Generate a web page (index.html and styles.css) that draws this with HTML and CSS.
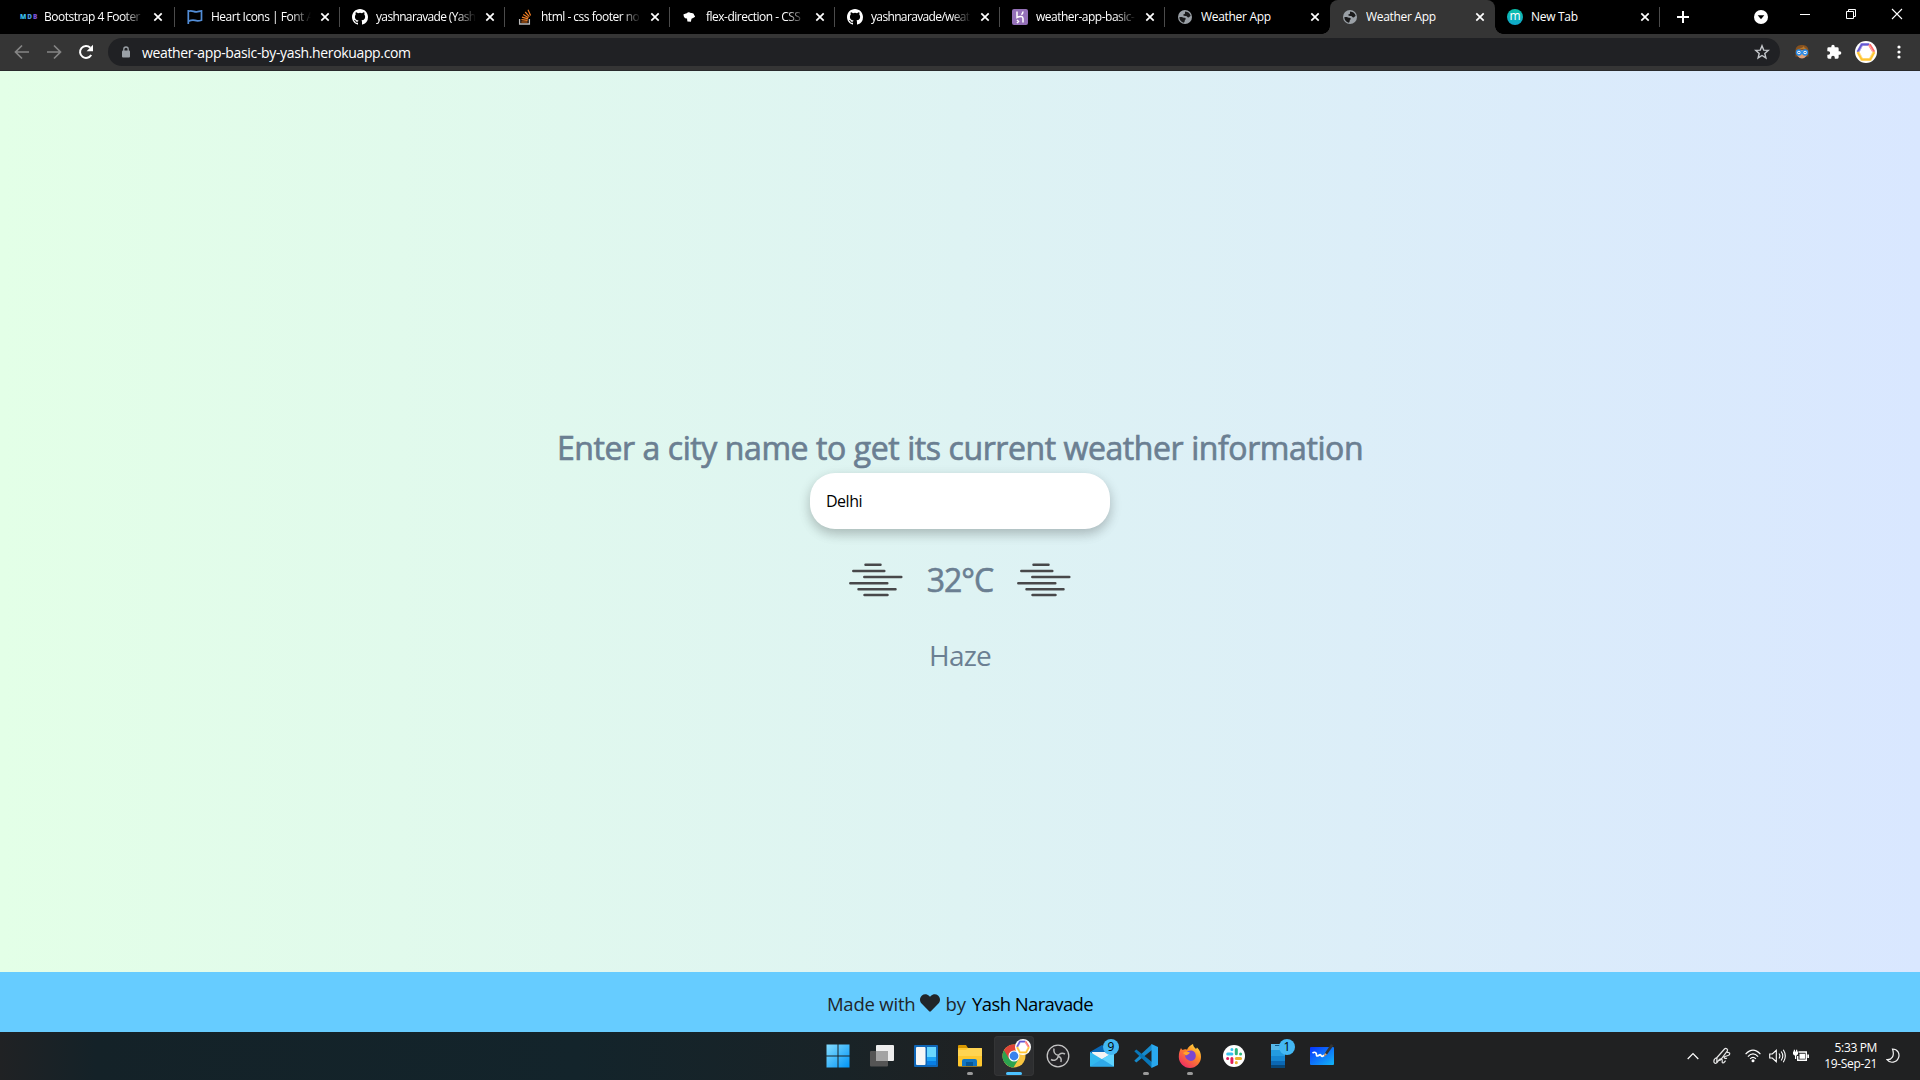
FILE: index.html
```html
<!DOCTYPE html>
<html lang="en">
<head>
<meta charset="utf-8">
<title>Weather App</title>
<link rel="stylesheet" href="styles.css">
</head>
<body>
<svg class="defs" width="0" height="0" aria-hidden="true">
  <symbol id="x" viewBox="0 0 10 10"><path d="M1.3 1.3l7.4 7.4M8.7 1.3L1.3 8.7" stroke="#fff" stroke-width="1.7"/></symbol>
  <symbol id="github" viewBox="0 0 16 16"><path fill="#fff" d="M8 0C3.58 0 0 3.58 0 8c0 3.54 2.29 6.53 5.47 7.59.4.07.55-.17.55-.38 0-.19-.01-.82-.01-1.49-2.01.37-2.53-.49-2.69-.94-.09-.23-.48-.94-.82-1.13-.28-.15-.68-.52-.01-.53.63-.01 1.08.58 1.23.82.72 1.21 1.87.87 2.33.66.07-.52.28-.87.51-1.07-1.78-.2-3.64-.89-3.64-3.95 0-.87.31-1.59.82-2.15-.08-.2-.36-1.02.08-2.12 0 0 .67-.21 2.2.82a7.6 7.6 0 0 1 4 0c1.53-1.04 2.2-.82 2.2-.82.44 1.1.16 1.92.08 2.12.51.56.82 1.27.82 2.15 0 3.07-1.87 3.75-3.65 3.95.29.25.54.73.54 1.48 0 1.07-.01 1.93-.01 2.2 0 .21.15.46.55.38A8.01 8.01 0 0 0 16 8c0-4.42-3.58-8-8-8z"/></symbol>
  <symbol id="globe" viewBox="0 0 16 16"><circle cx="8" cy="8" r="7" fill="#9aa0a6"/><path class="land" d="M8.300 2.400c2.700.1 4.900 1.900 5.400 4.600-1 .2-1.200 1.500-2.300 1.500-1.300 0-1.200-1.200-2.400-1.400-1.300-.2-2.600.1-2.800-1 0-.9 1.500-.8 1.800-1.600.3-.9-.4-1.500.3-2.100zM2.300 8.200c1.200-.4 2.600-.2 3.700.2 1 .4 2.500.1 2.700 1.100.2 1-1 1.400-1 2.300 0 .8-.2 1.600-.9 1.900C4.200 13.200 2.400 10.800 2.300 8.200z"/></symbol>
  <symbol id="orb" viewBox="0 0 22 22"><circle cx="11" cy="11" r="11" fill="#fff"/><g fill="none" stroke-width="3"><path stroke="#6558d3" d="M2.800 11L6.800 3.500h7.500"/><path stroke="#ff6b6b" d="M14.300 3.500l4.700 7.500"/><path stroke="#ffc531" d="M2.800 11l4 7.500h8.400l4-7.500"/></g><path d="M1 11L6 2h10l5 9-5 9H6z" fill="none" stroke="#fff" stroke-opacity=".5"/><path d="M4 11l3.500-6.200h7L18 11l-3.500 6.200h-7z" fill="none" stroke="#fff" stroke-opacity=".45"/></symbol>
  <symbol id="haze" viewBox="0 0 54 34"><path d="M16.500 1.700h15M4.300 8h31M15.300 14h37M1.300 20.200h37M9.500 26.200h37M15.500 32h23" stroke="#48484a" stroke-width="2.500" stroke-linecap="round"/></symbol>
</svg>

<header class="browser">
  <div class="tabstrip">
    <div class="tab">
      <span class="fav mdb"><b class="m">M</b><b class="d">D</b><b class="b">B</b></span>
      <span class="title">Bootstrap 4 Footer</span><svg class="close"><use href="#x"/></svg>
    </div>
    <div class="tab">
      <svg class="fav" viewBox="0 0 16 16"><path d="M1.300 1v14M2 2.200c3-1.300 5.200 1.200 7.700.7 1.700-.2 3.200-.9 4.800-1v9.300c-3 .9-4.300 1-6.500.2-2.500-.8-4-.3-6.400.7" fill="none" stroke="#528dd7" stroke-width="1.700"/></svg>
      <span class="title">Heart Icons | Font A</span><svg class="close"><use href="#x"/></svg>
    </div>
    <div class="tab"><svg class="fav"><use href="#github"/></svg><span class="title tight">yashnaravade (Yash</span><svg class="close"><use href="#x"/></svg></div>
    <div class="tab">
      <svg class="fav" viewBox="0 0 16 16"><path d="M2.600 10v5h9.800v-5" fill="none" stroke="#bcbbbb" stroke-width="1.300"/><path d="M4.300 13h6.300M4.400 10.700l6.200.7M5 8.100l6 1.800M6.200 5.500l5.300 3.200M8.200 3l4.200 4.600M11 .8l2.600 5.600" stroke="#f47f24" stroke-width="1.200"/></svg>
      <span class="title">html - css footer no</span><svg class="close"><use href="#x"/></svg>
    </div>
    <div class="tab">
      <svg class="fav" viewBox="0 0 16 16"><path d="M1.500 5.300c2-.3 1.500-1 3.300-1.100 1-1.300 3-.9 4-.1 2-.3 3.200.5 3.300 2.100 1.500.5 1 1.900-.1 2.200L9.500 9.800l-.6 3-3.500-.3-.4-3C2.600 9.700 1.500 8 1.500 5.300z" fill="#fff"/></svg>
      <span class="title">flex-direction - CSS</span><svg class="close"><use href="#x"/></svg>
    </div>
    <div class="tab"><svg class="fav"><use href="#github"/></svg><span class="title tight">yashnaravade/weat</span><svg class="close"><use href="#x"/></svg></div>
    <div class="tab">
      <svg class="fav" viewBox="0 0 16 16"><rect width="16" height="16" rx="2" fill="#9470b8"/><path d="M5 2.500v6c3-1.400 6-1.300 6 1v4M11 2.500c0 1.500-.6 2.300-1.500 3.200M5 11l1.500 1.500L5 14" fill="none" stroke="#fff" stroke-width="1.500"/></svg>
      <span class="title">weather-app-basic-</span><svg class="close"><use href="#x"/></svg>
    </div>
    <div class="tab flat"><svg class="fav"><use href="#globe"/></svg><span class="title whole">Weather App</span><svg class="close"><use href="#x"/></svg></div>
    <div class="tab active"><svg class="fav"><use href="#globe"/></svg><span class="title whole">Weather App</span><svg class="close"><use href="#x"/></svg></div>
    <div class="tab">
      <span class="fav round">m</span>
      <span class="title whole">New Tab</span><svg class="close"><use href="#x"/></svg>
    </div>
    <svg class="plus" viewBox="0 0 12 12"><path d="M6 0v12M0 6h12" stroke="#fff" stroke-width="2"/></svg>
    <div class="window">
      <svg class="search" viewBox="0 0 14 14"><circle cx="7" cy="7" r="7" fill="#fff"/><path d="M3.700 5.300h6.600L7 9.200z" fill="#000"/></svg>
      <svg viewBox="0 0 12 12"><path d="M1 6.500h10" stroke="#fff"/></svg>
      <svg viewBox="0 0 12 12"><path d="M1.500 3.500h7v7h-7zM3.500 3.500v-2h7v7h-2" fill="none" stroke="#fff"/></svg>
      <svg viewBox="0 0 12 12"><path d="M1 1l10 10M11 1L1 11" stroke="#fff" stroke-width="1.100"/></svg>
    </div>
  </div>
  <div class="toolbar">
    <svg class="nav" viewBox="0 0 16 16"><path d="M15 8H2M8 1.500L1.500 8 8 14.500" fill="none" stroke="#858585" stroke-width="1.700"/></svg>
    <svg class="nav" viewBox="0 0 16 16"><path d="M1 8h13M8 1.500L14.500 8 8 14.500" fill="none" stroke="#858585" stroke-width="1.700"/></svg>
    <svg class="nav" viewBox="0 0 16 16"><path d="M13.200 11A6 6 0 1 1 12.300 3.700" fill="none" stroke="#fff" stroke-width="2"/><path d="M15 .8v6.400H8.600z" fill="#fff"/></svg>
    <div class="address">
      <svg class="lock" viewBox="0 0 10 12"><rect x="1" y="4.500" width="8" height="7" rx="1" fill="#9aa0a6"/><path d="M2.800 5V3.200a2.200 2.200 0 0 1 4.400 0V5" fill="none" stroke="#9aa0a6" stroke-width="1.300"/></svg>
      <span class="url">weather-app-basic-by-yash.herokuapp.com</span>
      <svg class="star" viewBox="0 0 16 16"><path d="M8 1.800l1.700 4.300 4.600.3-3.500 3 1.100 4.500L8 11.500l-3.900 2.400 1.100-4.500-3.500-3 4.600-.3z" fill="none" stroke="#c4c7cb" stroke-width="1.400"/></svg>
    </div>
    <svg class="ext" viewBox="0 0 16 16"><path d="M1.500 12V6C2 2 5 1 8 1s6 1 6.500 5v6.500H1.300z" fill="#85511f"/><path d="M3.500 6h9v6q-4.500 5-9 0z" fill="#e1a37b"/><path d="M3 5q5-.5 7-3 0 2.500 3.500 3" fill="#b8792e"/><g fill="#fff" stroke="#258bea" stroke-width="1.500"><circle cx="4.900" cy="8.500" r="2.400"/><circle cx="11.100" cy="8.500" r="2.400"/></g><circle cx="4.900" cy="8.500" r=".8" fill="#135aa5"/><circle cx="11.100" cy="8.500" r=".8" fill="#135aa5"/></svg>
    <svg class="puzzle" viewBox="0 0 24 24"><path fill="#fff" d="M20.500 11H19V7a2 2 0 0 0-2-2h-4V3.500a2.500 2.500 0 0 0-5 0V5H4a2 2 0 0 0-2 2v3.800h1.500a2.700 2.700 0 0 1 0 5.400H2V20a2 2 0 0 0 2 2h3.800v-1.500a2.700 2.700 0 0 1 5.400 0V22H17a2 2 0 0 0 2-2v-4h1.500a2.500 2.500 0 0 0 0-5z"/></svg>
    <svg class="avatar"><use href="#orb"/></svg>
    <svg class="dots" viewBox="0 0 4 14"><g fill="#fff"><circle cx="2" cy="2" r="1.600"/><circle cx="2" cy="7" r="1.600"/><circle cx="2" cy="12" r="1.600"/></g></svg>
  </div>
</header>

<main class="weather">
  <h1 class="prompt">Enter a city name to get its current weather information</h1>
  <input class="city" type="text" value="Delhi" aria-label="City">
  <div class="reading">
    <svg class="haze"><use href="#haze"/></svg>
    <span class="temp">32°C</span>
    <svg class="haze"><use href="#haze"/></svg>
  </div>
  <p class="condition">Haze</p>
</main>

<footer class="credit">
  <span class="made">Made with</span>
  <svg class="heart" viewBox="0 0 512 512"><path fill="#212529" d="M462 62c-55-46-136-38-186 14l-20 20-20-20C186 24 105 16 50 62c-63 54-66 150-10 208l194 199c12 13 32 13 44 0l194-199c56-58 53-154-10-208z"/></svg>
  <span class="by">by</span>
  <span class="author">Yash Naravade</span>
</footer>

<nav class="taskbar">
  <div class="apps">
    <div class="app"><svg viewBox="0 0 24 24"><defs><linearGradient id="win" x2="1" y2="1"><stop stop-color="#85ddff"/><stop offset="1" stop-color="#0094f5"/></linearGradient></defs><path fill="url(#win)" d="M.5.500H11.500v11H.5zM12.500.500h11v11h-11zM.5 12.500h11v11H.5zM12.500 12.500h11v11h-11z"/></svg></div>
    <div class="app"><svg viewBox="0 0 24 24"><rect x="6" y="1" width="18" height="16" rx="1" fill="#ededed"/><rect y="7" width="18" height="15.500" rx="1" fill="#555"/><path d="M6 7h12v10H6z" fill="#a3a3a3"/></svg></div>
    <div class="app"><svg viewBox="0 0 24 24"><rect y="1" width="24" height="22" rx="1" fill="#0f66b7"/><rect x="2" y="3" width="9.500" height="18" rx="1" fill="#f6f6f6"/><path fill="#69d7ff" d="M13 3h9v10h-9z"/><path fill="#1ba2f5" d="M13 13h9v4h-9z"/><path fill="#087ee4" d="M13 17h9v4h-9z"/></svg></div>
    <div class="app run"><svg viewBox="0 0 24 24"><path d="M0 2q0-1 1-1h7l2 3v4H0z" fill="#d79600"/><rect y="4" width="24" height="18.500" rx="1" fill="#ffc72e"/><path d="M0 6h8l2-2h13q1 0 1 1v7H0z" fill="#ffd452"/><path d="M4 22v-5q0-2 2-2h11q2 0 2 2v5z" fill="#1276c2"/><path d="M8 18h7v4H8z" fill="#075796"/></svg></div>
    <div class="app current"><svg viewBox="0 0 24 24"><circle cx="12" cy="12" r="11.500" fill="#f8c541"/><path d="M12 12L2 6.300A11.500 11.500 0 0 0 11.500 23.500l5.200-8.700z" fill="#2ca34f"/><path d="M2 6.300A11.500 11.500 0 0 1 22 6.500H12L7 14.800z" fill="#df4438"/><circle cx="12" cy="12" r="5.500" fill="#fff"/><circle cx="12" cy="12" r="4.400" fill="#3981ed"/></svg><svg class="profile"><use href="#orb"/></svg></div>
    <div class="app"><svg viewBox="0 0 24 24"><circle cx="12" cy="12" r="10.800" fill="#252427" stroke="#c6c6c6" stroke-width="1.300"/><path d="M8 4.500c-.6 3.500 1 6.200 4.200 6.800M19 10c-3-1.700-6-.5-6.800 2.300 2.300.8 3.500 3 2.700 5.700M5 15.500c3.200 1.800 6.700.2 7.200-3.500" fill="none" stroke="#b9b9b9" stroke-width="1.500"/></svg></div>
    <div class="app"><svg viewBox="0 0 24 24"><path d="M0 8l12-7 12 7v4H0z" fill="#0866b5"/><path d="M2 8h19v7l-9 5-9-6z" fill="#f4f4f4"/><path d="M0 8l24 14.500H0z" fill="#32b8ef"/><path d="M24 8v14.500H0z" fill="#2fa9e9"/><path d="M24 8v14.500L12 15z" fill="#5fd4ff"/></svg><span class="badge">9</span></div>
    <div class="app run"><svg viewBox="0 0 24 24"><path d="M18 0L2.500 14.500.3 16.700l2 1.700L18 6z" fill="#168acb"/><path d="M18 24L.3 7.300l2-1.700L18 18z" fill="#0877b9"/><path d="M17.500 0L24 3v18l-6.500 3z" fill="#29a8ee"/></svg></div>
    <div class="app run"><svg viewBox="0 0 24 24"><defs><linearGradient id="fox" x1="1" y1="0" x2=".3" y2="1"><stop stop-color="#fff34d"/><stop offset=".45" stop-color="#ff8d25"/><stop offset="1" stop-color="#f02e64"/></linearGradient></defs><path d="M3 4c.4 1 1 1.600 1.700 2 1.600-.9 3-.8 4.300-.2C10.200 2.800 12.500 1 15 0c.2 2 1.300 3.500 3 5l1-1.500C21.800 6 23 9 23 13c0 6-5 11-11 11S.8 19 .8 13C.800 9 1.600 6.500 3 4z" fill="url(#fox)"/><path d="M10 7q6-2 7.500 3c1.500 5-3 8-6.500 6.500S6 11.500 8 9z" fill="#7946d0"/><path d="M5 9c3-2 5-1 7-.5-1 2-3 2-4 3z" fill="#ffa52b"/></svg></div>
    <div class="app"><svg viewBox="0 0 24 24"><circle cx="12" cy="12" r="11" fill="#fff"/><g stroke-width="3" stroke-linecap="round"><path d="M9.900 5.500v.1M5.700 10h4.200" stroke="#36c5f0"/><path d="M14.300 5.500v4.300M18.600 10v.1" stroke="#2eb67d"/><path d="M14.300 14.400h4.300M14.300 18.600v.1" stroke="#ecb22e"/><path d="M9.900 14.400v4.200M5.600 14.400h.1" stroke="#e01e5a"/></g></svg></div>
    <div class="app"><svg viewBox="0 0 24 24"><path fill="#57b9ea" d="M5 0h14v7H5z"/><path fill="#239be0" d="M5 6h14v6H5z"/><path fill="#1686d1" d="M5 12h14v5H5z"/><path fill="#0b68b4" d="M5 17h14v4H5z"/><path fill="#084779" d="M5 21h14v3H5z"/><path d="M9 1.500h6" stroke="#105b8e"/></svg><span class="badge">1</span></div>
    <div class="app"><svg viewBox="0 0 24 24"><defs><linearGradient id="board" x2="1" y2="1"><stop stop-color="#0833ff"/><stop offset="1" stop-color="#13b6f5"/></linearGradient></defs><rect y="3" width="24" height="18" rx="1" fill="url(#board)"/><path d="M2.500 9c3-2 4 .5 4 2s1.500 1.200 3 0 1.500 2 3 1.200 1.500-1 2.500-1" fill="none" stroke="#fff" stroke-width="1.700"/><path d="M14 12.500l1-3.500L21 0l2.500 1.500-6.500 9z" fill="#333"/><path d="M14 12.500l1-3.500 2 1.500z" fill="#d7a47b"/></svg></div>
  </div>
  <div class="tray">
    <svg class="chev" viewBox="0 0 12 8"><path d="M.7 7L6 1.500 11.300 7" fill="none" stroke="#fff" stroke-width="1.200"/></svg>
    <svg class="pen" viewBox="0 0 18 18"><path d="M4 10.500L11.500 2c1.300-1.300 4 .2 2.700 2.200L7.500 13 3.800 14.200zM4 10.500C-.5 12 .5 17 3 16.200c2.500-1 2.500-5 5.500-4.200 2 .5-.5 4 1.500 4 1.200 0 1.600-1.300 2.600-2.300M14 5.500c4-.5 3 2.500 1 3l-3 1c-2 1 0 2.500 2 1.700" fill="none" stroke="#e8e8e8" stroke-width="1.200"/></svg>
    <svg class="wifi" viewBox="0 0 16 14"><g fill="none" stroke="#fff" stroke-width="1.200"><path d="M.6 5.200Q8-2.800 15.400 5.200M2.900 7.600q5.100-5.300 10.200 0M5.100 9.900q2.900-3 5.800 0"/></g><circle cx="8" cy="11.800" r="1.500" fill="#fff"/></svg>
    <svg class="sound" viewBox="0 0 17 14"><path d="M.7 5v4h2.600l4 3.700V1.300L3.300 5zM10 4.500q1.800 2.500 0 5M12.200 2.500q3.200 4.500 0 9M14.300.8q4 6.200 0 12.400" fill="none" stroke="#fff" stroke-width="1.100"/></svg>
    <svg class="battery" viewBox="0 0 16 14"><path d="M5.500 3h7.800v8.300H4.700V7" fill="none" stroke="#fff" stroke-width="1.400"/><path d="M6.500 4.700H12v5H6.500zM14.300 5.500H16V9h-1.700zM0 2.500h5v2.700L3.200 6.700V10H2V6.700L0 5.200zM.8.700H2v2H.8zM3 .7h1.200v2H3z" fill="#fff"/></svg>
    <div class="clock"><span class="time">5:33 PM</span><span class="date">19-Sep-21</span></div>
    <svg class="moon" viewBox="0 0 14 16"><path d="M6.500 1c5.300 0 7.500 4.800 6 8.800C10.800 14.500 4.200 16 1 11.700c4.500.3 8-3.500 5.500-10.700z" fill="none" stroke="#f2f2f2" stroke-width="1.200"/></svg>
  </div>
</nav>
</body>
</html>
```
FILE: styles.css
```css
* { box-sizing: border-box; }
body {
  margin: 0;
  width: 1920px;
  height: 1080px;
  overflow: hidden;
  display: flex;
  flex-direction: column;
  font-family: "Open Sans", "Noto Sans", sans-serif;
}
svg { display: block; flex: none; }
.defs { position: absolute; }

/* Browser chrome */
.browser { height: 71px; flex: none; background: #353535; border-bottom: 1px solid #292a2c; }
.tabstrip { height: 34px; padding-left: 10px; display: flex; align-items: center; background: #000; }
.tab {
  position: relative;
  width: 165px;
  height: 34px;
  padding-left: 10px;
  display: flex;
  align-items: center;
  flex: none;
  color: #fff;
}
.tab:nth-child(n+2) { padding-left: 12px; }
.tab::after {
  content: "";
  position: absolute;
  right: 0;
  top: 7px;
  width: 1px;
  height: 20px;
  background: #4b4b4b;
}
.tab.flat::after, .tab.active::after { display: none; }
.tab.active { background: #353535; border-radius: 8px 8px 0 0; }
.tab.active::before {
  content: "";
  position: absolute;
  left: -8px;
  right: -8px;
  bottom: 0;
  height: 8px;
  background:
    radial-gradient(circle at 0 0, transparent 7.500px, #353535 8px) left / 8px 8px no-repeat,
    radial-gradient(circle at 100% 0, transparent 7.500px, #353535 8px) right / 8px 8px no-repeat;
}
.fav { width: 16px; height: 16px; margin-right: 8px; flex: none; }
.mdb { display: flex; align-items: center; gap: 1px; font: 700 6.500px/16px "Open Sans", sans-serif; }
.mdb .m { color: #39bde8; }
.mdb .d { color: #4a9be0; }
.mdb .b { color: #7a50d0; }
.round {
  border-radius: 50%;
  background: linear-gradient(#0abfa8, #10a8cc);
  font-size: 12px;
  line-height: 13px;
  text-align: center;
}
.land { fill: #1a1a1b; }
.title {
  width: 100px;
  flex: none;
  overflow: hidden;
  white-space: nowrap;
  font-size: 12px;
  line-height: 18px;
  letter-spacing: -.5px;
  -webkit-mask-image: linear-gradient(to right, #000 80%, transparent);
  mask-image: linear-gradient(to right, #000 80%, transparent);
}
.title.tight { letter-spacing: -.65px; }
.title.whole { letter-spacing: -.3px; -webkit-mask-image: none; mask-image: none; }
.close { width: 10px; height: 10px; margin-left: 9px; }
.plus { width: 12px; height: 12px; margin-left: 17px; }
.window {
  align-self: flex-start;
  margin-left: auto;
  padding-right: 17px;
  height: 28px;
  display: flex;
  align-items: center;
  gap: 34px;
}
.window svg { width: 12px; height: 12px; }
.window .search { width: 14px; height: 14px; position: relative; top: 3px; margin-right: -3px; }
.toolbar { height: 36px; padding: 0 19px 0 14px; display: flex; align-items: center; }
.nav { width: 16px; height: 16px; margin-right: 16px; }
.address {
  flex: 1;
  height: 28px;
  margin-left: -2px;
  padding: 0 10px 0 13px;
  display: flex;
  align-items: center;
  border-radius: 14px;
  background: #202124;
}
.lock { width: 10px; height: 12px; }
.url { margin-left: 11px; color: #fff; font-size: 14px; letter-spacing: -.35px; }
.star { width: 16px; height: 16px; margin-left: auto; }
.ext { width: 16px; height: 16px; margin-left: 14px; }
.puzzle { width: 16px; height: 16px; margin-left: 16px; }
.avatar { width: 22px; height: 22px; margin-left: 13px; }
.dots { width: 4px; height: 14px; margin-left: 20px; }

/* Weather page */
.weather {
  height: 901px;
  flex: none;
  padding-top: 352px;
  display: flex;
  flex-direction: column;
  align-items: center;
  background: linear-gradient(to right, #e3ffe7, #d9e7ff);
  color: #6b7f92;
}
.prompt {
  margin: 0;
  font-size: 32px;
  font-weight: 400;
  line-height: 50px;
  letter-spacing: -.42px;
  white-space: nowrap;
  -webkit-text-stroke: .7px currentColor;
}
.city {
  width: 300px;
  height: 56px;
  padding: 0 16px;
  border: 0;
  border-radius: 25px;
  outline: 0;
  background: #fff;
  box-shadow: 0 5px 11px rgba(0, 0, 0, .18), 0 4px 15px rgba(0, 0, 0, .08);
  color: #000;
  font-family: inherit;
  font-size: 16px;
  letter-spacing: -.5px;
}
.reading { margin-top: 28px; display: flex; align-items: center; gap: 23px; height: 46px; }
.haze { width: 54px; height: 34px; }
.temp {
  width: 68px;
  text-align: center;
  font-size: 32px;
  line-height: 46px;
  letter-spacing: -1px;
  -webkit-text-stroke: .6px currentColor;
}
.condition { margin: 32px 0 0; font-size: 28px; line-height: 40px; letter-spacing: -.8px; }

.credit {
  height: 60px;
  flex: none;
  padding-top: 2px;
  display: flex;
  align-items: center;
  justify-content: center;
  background: #6cf;
  color: #212529;
  font-size: 18.500px;
}
.made { letter-spacing: -.2px; }
.heart { width: 20px; height: 20px; margin: 0 5px; }
.by { margin-right: 6px; }
.author { color: #000; letter-spacing: -.6px; }

/* Taskbar */
.taskbar {
  height: 48px;
  flex: none;
  display: grid;
  grid-template-columns: 1fr auto;
  background: linear-gradient(to right, #202224 0, #142228 5%, #13242b 30%, #192327 44%, #202122 52%, #202122);
}
.apps { padding-left: 818px; display: flex; gap: 4px; align-items: center; }
.app { position: relative; width: 40px; height: 40px; display: grid; place-items: center; }
.app svg { width: 24px; height: 24px; }
.app.current { border-radius: 4px; background: #2d2e30; box-shadow: inset 0 0 0 1px #343536; }
.app.run::after, .app.current::after {
  content: "";
  position: absolute;
  bottom: 1px;
  width: 6px;
  height: 3px;
  border-radius: 2px;
  background: #9a9a9a;
}
.app.current::after { width: 16px; background: #4cc2ff; }
.app .profile { position: absolute; top: 3px; left: 21px; width: 16px; height: 16px; }
.badge {
  position: absolute;
  top: 3px;
  right: 3px;
  width: 16px;
  height: 16px;
  border-radius: 50%;
  background: #43b8f4;
  color: #000;
  font-size: 12px;
  line-height: 16px;
  text-align: center;
}
.tray { padding-right: 20px; display: flex; align-items: center; }
.chev { width: 12px; height: 8px; margin-right: 14px; }
.pen { width: 18px; height: 18px; margin-right: 14px; }
.wifi { width: 16px; height: 14px; margin-right: 8px; }
.sound { width: 17px; height: 14px; margin-right: 7px; }
.battery { width: 16px; height: 14px; }
.clock {
  width: 68px;
  display: flex;
  flex-direction: column;
  align-items: flex-end;
  color: #fff;
  font-size: 12px;
  line-height: 16px;
  letter-spacing: -.35px;
}
.moon { width: 14px; height: 16px; margin-left: 9px; }
```
